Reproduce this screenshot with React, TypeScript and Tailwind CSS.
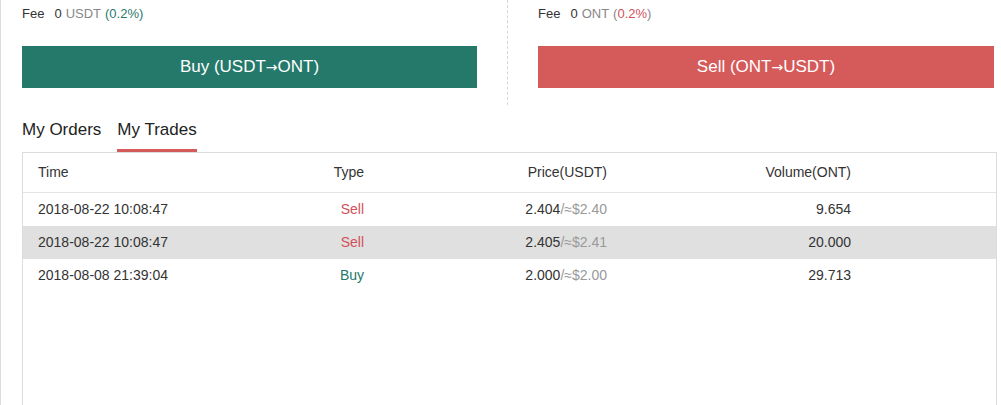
import React from "react";

const trades = [
  { time: "2018-08-22 10:08:47", type: "Sell", price: "2.404", usd: "2.40", volume: "9.654" },
  { time: "2018-08-22 10:08:47", type: "Sell", price: "2.405", usd: "2.41", volume: "20.000" },
  { time: "2018-08-08 21:39:04", type: "Buy", price: "2.000", usd: "2.00", volume: "29.713" },
];

const Arrow = () => <span style={{ fontFamily: '"DejaVu Sans", sans-serif' }} className="text-[14px]">→</span>;

export default function App() {
  return (
    <div
      className="w-[1001px] h-[405px] overflow-hidden bg-white border-l border-[#dcdcdc] text-[#333]"
      style={{ fontFamily: '"Liberation Sans", Arial, sans-serif' }}
    >
      {/* trade forms */}
      <div className="flex">
        <div className="w-[506px] pl-[21px] pt-[5px] pb-[17px]">
          <div className="text-[13px] leading-[18px] h-[18px]">
            <span>Fee</span>
            <span className="ml-[10px]">0</span>
            <span className="ml-[4px] text-[#888]">USDT</span>
            <span className="ml-[4px] text-[#2a7a6c]">(0.2%)</span>
          </div>
          <button className="mt-[23px] w-[455px] h-[42px] bg-[#24796a] text-white text-[17px] cursor-pointer">
            Buy (USDT<Arrow />ONT)
          </button>
        </div>
        <div className="border-l border-dashed border-[#d6d6d6] h-[105px]" />
        <div className="flex-1 pl-[30px] pt-[5px]">
          <div className="text-[13px] leading-[18px] h-[18px]">
            <span>Fee</span>
            <span className="ml-[10px]">0</span>
            <span className="ml-[4px] text-[#888]">ONT</span>
            <span className="ml-[4px] text-[#888]">
              (<span className="text-[#d4505a]">0.2%</span>)
            </span>
          </div>
          <button className="mt-[23px] w-[456px] h-[42px] bg-[#d55a5a] text-white text-[17px] cursor-pointer">
            Sell (ONT<Arrow />USDT)
          </button>
        </div>
      </div>

      {/* tabs */}
      <div className="flex gap-[16px] pl-[21px] mt-[9px] text-[17px]">
        <div className="h-[38px] pt-[3px] text-[#222]">My Orders</div>
        <div className="h-[38px] pt-[3px] text-[#222] border-b-[3px] border-[#d55a5a]">My Trades</div>
      </div>

      {/* table */}
      <div className="ml-[21px] w-[975px] h-[300px] border border-[#dcdcdc] text-[14px]">
        <div className="grid grid-cols-[226px_100px_243px_244px] pl-[15px] h-[40px] items-center border-b border-[#e4e4e4] text-[#333]">
          <div>Time</div>
          <div className="text-right">Type</div>
          <div className="text-right">Price(USDT)</div>
          <div className="text-right">Volume(ONT)</div>
        </div>
        {trades.map((t, i) => (
          <div
            key={i}
            className={
              "grid grid-cols-[226px_100px_243px_244px] pl-[15px] h-[33px] items-center " +
              (i === 1 ? "bg-[#e0e0e0]" : "bg-white")
            }
          >
            <div>{t.time}</div>
            <div className={t.type === "Sell" ? "text-right text-[#d4505a]" : "text-right text-[#24796a]"}>
              {t.type}
            </div>
            <div className="text-right">
              {t.price}
              <span className="text-[#999]">/≈${t.usd}</span>
            </div>
            <div className="text-right">{t.volume}</div>
          </div>
        ))}
      </div>
    </div>
  );
}
